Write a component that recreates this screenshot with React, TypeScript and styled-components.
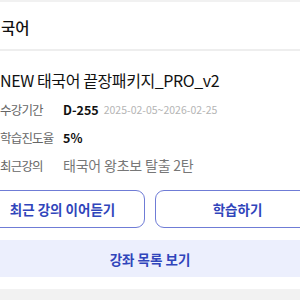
import styled, { createGlobalStyle } from 'styled-components';

const GlobalStyle = createGlobalStyle`
  html, body {
    margin: 0;
    padding: 0;
    background: #ffffff;
    overflow: hidden;
  }
  body {
    font-family: 'Noto Sans CJK KR', 'Noto Sans', sans-serif;
    color: #111;
  }
`;

const Page = styled.div`
  width: 340px;
  margin-left: -20px;
  border-top: 2px solid #f1f1f1;
  display: flex;
  flex-direction: column;
`;

const Header = styled.div`
  height: 49px;
  box-sizing: border-box;
  padding: 3px 20px 0 21px;
  display: flex;
  align-items: center;
  border-bottom: 2px solid #eeeeee;
`;

const HeaderTitle = styled.h1`
  margin: 0;
  font-size: 15.5px;
  font-weight: 500;
`;

const Body = styled.div`
  padding: 18px 20px 0;
  display: flex;
  flex-direction: column;
`;

const CourseTitle = styled.h2`
  margin: 0 0 4px;
  font-size: 16px;
  font-weight: 400;
  line-height: 22px;
  letter-spacing: -0.4px;
`;

const InfoRow = styled.div`
  display: flex;
  align-items: center;
  height: 28px;
  font-size: 12.5px;
`;

const Label = styled.span`
  width: 63px;
  color: #666;
  flex-shrink: 0;
  letter-spacing: -0.8px;
`;

const Value = styled.span<{ $muted?: boolean; $bold?: boolean }>`
  color: ${p => (p.$muted ? '#777' : '#111')};
  font-weight: ${p => (p.$bold ? 700 : 400)};
  font-size: ${p => (p.$bold ? '12.5px' : '14px')};
  letter-spacing: ${p => (p.$bold ? '0' : '-0.2px')};
`;

const Period = styled.span`
  margin-left: 5px;
  color: #b5b5b5;
  font-size: 10.5px;
`;

const Actions = styled.div`
  margin-top: 11px;
  display: grid;
  grid-template-columns: 1fr 1fr;
  gap: 10px;
`;

const OutlineButton = styled.button`
  height: 38px;
  border: 1.5px solid #6f7cd6;
  border-radius: 9px;
  background: #fff;
  color: #3045bb;
  font-family: inherit;
  font-size: 13.5px;
  font-weight: 700;
`;

const WideButton = styled.button`
  margin-top: 12px;
  height: 37px;
  border: none;
  background: #eceffd;
  color: #3045bb;
  font-family: inherit;
  font-size: 13.5px;
  font-weight: 700;
`;

const Footer = styled.div`
  margin-top: 12px;
  height: 20px;
  background: #f2f2f2;
`;

export default function App() {
  return (
    <>
      <GlobalStyle />
      <Page>
        <Header>
          <HeaderTitle>국어</HeaderTitle>
        </Header>
        <Body>
          <CourseTitle>NEW 태국어 끝장패키지_PRO_v2</CourseTitle>
          <InfoRow>
            <Label>수강기간</Label>
            <Value $bold>D-255</Value>
            <Period>2025-02-05~2026-02-25</Period>
          </InfoRow>
          <InfoRow>
            <Label>학습진도율</Label>
            <Value $bold>5%</Value>
          </InfoRow>
          <InfoRow>
            <Label>최근강의</Label>
            <Value $muted>태국어 왕초보 탈출 2탄</Value>
          </InfoRow>
        </Body>
        <Actions>
          <OutlineButton>최근 강의 이어듣기</OutlineButton>
          <OutlineButton>학습하기</OutlineButton>
        </Actions>
        <WideButton>강좌 목록 보기</WideButton>
        <Footer />
      </Page>
    </>
  );
}
